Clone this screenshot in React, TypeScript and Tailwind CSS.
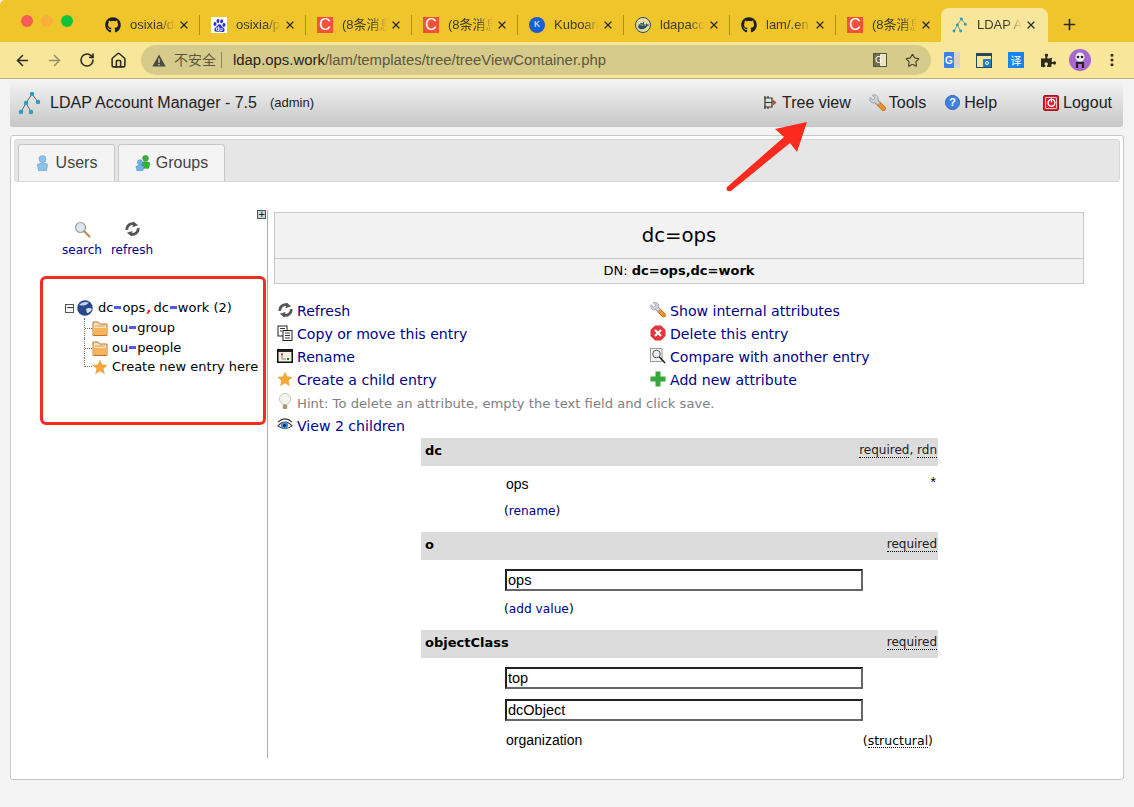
import React from 'react';
import { ArrowLeft, ArrowRight, RotateCw, Home, Star, MoreVertical, Plus, X } from 'lucide-react';
import { FaGithub, FaPuzzlePiece, FaDocker } from 'react-icons/fa';
import { SiBaidu } from 'react-icons/si';

const LamLogo = ({ size = 24 }: { size?: number }) => (
  <svg width={size} height={size} viewBox="0 0 24 24">
    <g stroke="#5a6a70" strokeWidth="1" fill="none">
      <path d="M14 3 L8 12 L3 21 M8 12 L13 21 M14 3 L20 11" />
    </g>
    <g fill="#2f9cc0">
      <circle cx="14" cy="3" r="2.2" />
      <circle cx="8" cy="12" r="2.2" />
      <circle cx="20" cy="11" r="2.2" />
      <circle cx="3" cy="21" r="2.2" />
      <circle cx="13" cy="21" r="2.2" />
    </g>
  </svg>
);

const CsdnIcon = () => (
  <span className="w-4 h-4 bg-[#f5503a] text-white flex items-center justify-center text-[16px] leading-none font-['Liberation_Sans',sans-serif]">C</span>
);

const browserTabs = [
  { icon: <FaGithub size={16} className="text-[#1b1f23]" />, title: 'osixia/d' },
  { icon: <span className="w-4 h-4 bg-white flex items-center justify-center"><SiBaidu size={13} className="text-[#2932e1]" /></span>, title: 'osixia/p' },
  { icon: <CsdnIcon />, title: '(8条消息' },
  { icon: <CsdnIcon />, title: '(8条消息' },
  { icon: <span className="w-4 h-4 rounded-full bg-[#1a5fd0] text-white flex items-center justify-center text-[9px] font-['Liberation_Sans',sans-serif]">K</span>, title: 'Kuboard' },
  { icon: <span className="w-4 h-4 rounded-full border border-[#24505f] bg-[#e8d9a0] flex items-center justify-center"><FaDocker size={11} className="text-[#24505f]" /></span>, title: 'ldapacc' },
  { icon: <FaGithub size={16} className="text-[#1b1f23]" />, title: 'lam/.en' },
  { icon: <CsdnIcon />, title: '(8条消息' },
];

const tabTitle = "ml-[9px] w-[45px] overflow-hidden whitespace-nowrap text-[13px] text-[#3b3b2f] font-['Liberation_Sans','Noto_Sans_CJK_SC',sans-serif] [mask-image:linear-gradient(to_right,black_65%,transparent)]";

const BrowserTab = ({ icon, title, last }: { icon: React.ReactNode; title: string; last: boolean }) => (
  <div className={`w-[106px] h-[20px] shrink-0 flex items-center pl-[11px] ${last ? '' : 'border-r border-[#a98d2a]'}`}>
    <span className="w-4 h-4 flex items-center justify-center shrink-0">{icon}</span>
    <span className={tabTitle}>{title}</span>
    <X size={12} strokeWidth={2.4} className="ml-[3px] text-[#2a2a20]" />
  </div>
);

const TabStrip = () => (
  <div className="h-[42px] bg-[#f0c52c] rounded-tl-[5px] flex shrink-0">
    <div className="w-[94px] shrink-0 flex items-start gap-2 pl-[21px] pt-[15px]">
      <span className="w-3 h-3 rounded-full bg-[#f65c58]" />
      <span className="w-3 h-3 rounded-full bg-[#f7ae3c]" />
      <span className="w-3 h-3 rounded-full bg-[#15c23c]" />
    </div>
    <div className="flex items-center h-[42px] pt-[15px] pb-[7px]">
      {browserTabs.map((t, i) => (
        <BrowserTab key={i} icon={t.icon} title={t.title} last={i === browserTabs.length - 1} />
      ))}
    </div>
    <div className="self-end ml-[-1px] w-[107px] h-[34px] bg-[#f8e79b] rounded-t-[8px] flex items-center pl-[11px]">
      <LamLogo size={16} />
      <span className={tabTitle}>LDAP A</span>
      <X size={12} strokeWidth={2.4} className="ml-[3px] text-[#2a2a20]" />
    </div>
    <Plus size={17} strokeWidth={2.4} className="ml-[13px] mt-[16px] text-[#2a2a20]" />
  </div>
);

const Toolbar = () => (
  <div className="h-[37px] bg-[#f8e79b] border-b border-[#bfb27a] flex items-center shrink-0 pl-[14px]">
    <ArrowLeft size={17} strokeWidth={2.2} className="text-[#2e2a1c]" />
    <ArrowRight size={17} strokeWidth={2.2} className="ml-[15px] text-[#9a8f66]" />
    <RotateCw size={16} strokeWidth={2.4} className="ml-[16px] text-[#2e2a1c]" />
    <Home size={17} strokeWidth={2.2} className="ml-[15px] text-[#2e2a1c]" />
    <div className="ml-[14px] w-[790px] h-[30px] rounded-full bg-[#d6cb8a] flex items-center pl-[11px] pr-[11px]">
      <svg width="14" height="13" viewBox="0 0 14 13"><path d="M7 0.5 L13.7 12.5 H0.3 Z" fill="#4a4a40" /><rect x="6.3" y="4.5" width="1.4" height="4.5" fill="#d6cb8a" /><rect x="6.3" y="10" width="1.4" height="1.4" fill="#d6cb8a" /></svg>
      <span className="ml-[8px] -mt-[2px] text-[14px] text-[#5c5840] font-['Noto_Sans_CJK_SC',sans-serif]">不安全</span>
      <span className="ml-[5px] w-px h-[16px] bg-[#8f8860]" />
      <span className="ml-[11px] text-[14.9px] text-[#5c5840] font-['Liberation_Sans',sans-serif]"><span className="text-[#26241a]">ldap.ops.work</span>/lam/templates/tree/treeViewContainer.php</span>
      <span className="ml-auto w-[14px] h-[14px] border border-[#55523c] bg-gradient-to-r from-[#6f6c52] from-50% to-[#ece6bf] to-50% text-white text-[9px] leading-none flex items-center pl-[1px]">G</span>
      <Star size={15} strokeWidth={1.8} className="ml-[18px] text-[#45422f]" />
    </div>
    <div className="ml-[13px] flex items-center">
      <span className="w-4 h-4 bg-gradient-to-r from-[#3b82e8] from-60% to-[#d8d4c0] to-60% text-white text-[10px] font-bold flex items-center pl-[1px] rounded-[1px] font-['Liberation_Sans',sans-serif]">G</span>
      <span className="ml-[16px] w-4 h-[15px] border-t-[3px] border border-[#27475c] flex items-end justify-end"><span className="w-[8px] h-[8px] rounded-[1px] bg-[#1d7ec4] flex items-center justify-center"><span className="w-[4px] h-[4px] rounded-full border border-white" /></span></span>
      <span className="ml-[16px] w-4 h-4 bg-[#1a84ee] text-white text-[11px] leading-none flex items-center justify-center font-['Noto_Sans_CJK_SC',sans-serif]">译</span>
      <FaPuzzlePiece size={15} className="ml-[17px] text-[#2e2a1c]" />
      <span className="ml-[13px] w-[22px] h-[22px] rounded-full bg-[#a866d0] flex items-center justify-center">
        <svg width="14" height="16" viewBox="0 0 14 16"><circle cx="7" cy="5" r="4.5" fill="#eee" /><circle cx="5" cy="5" r="1.3" fill="#222" /><circle cx="9" cy="5" r="1.3" fill="#222" /><path d="M3 16 V10 H11 V16 H9 V12 H5 V16 Z" fill="#222" /></svg>
      </span>
      <MoreVertical size={16} strokeWidth={2.6} className="ml-[13px] text-[#2e2a1c]" />
    </div>
  </div>
);

/* small page icons */
const TreeViewIcon = () => (
  <svg width="14" height="15" viewBox="0 0 14 15" fill="none" stroke="#3a3026" strokeWidth="1.2"><path d="M2 1 V14 M1 3 H9 V12 H1 M2 7.5 H9 M5 1 V3 M5 12 V14" /><path d="M10 4.5 L13.5 7.5 L10 10.5 Z" fill="#a4552a" stroke="none" /></svg>
);
const WrenchIcon = () => (
  <svg width="17" height="17" viewBox="0 0 17 17">
    <path d="M7 7 L14.5 14.5" stroke="#b4620f" strokeWidth="4.6" strokeLinecap="round" />
    <path d="M7 7 L14.5 14.5" stroke="#f0922c" strokeWidth="3.4" strokeLinecap="round" />
    <path d="M1.2 3.4 L4 6 L6 4 L3.4 1.2 Q7 -0.2 8.6 2.4 Q9.6 4.4 8.6 6 L11 8.6 L8.6 11 L6 8.6 Q3.8 9.6 2 8.2 Q0 6.4 1.2 3.4 Z" fill="#cfd4dc" stroke="#8a919c" strokeWidth="0.7" />
  </svg>
);
const HelpIcon = () => (
  <span className="w-[15px] h-[15px] rounded-full bg-[#3f83e0] border border-[#2b62b8] text-white text-[11px] font-bold leading-none flex items-center justify-center font-['Liberation_Sans',sans-serif]">?</span>
);
const LogoutIcon = () => (
  <span className="w-[16px] h-[16px] bg-[#d8202a] border border-[#9a1a1f] rounded-[2px] flex items-center justify-center">
    <span className="w-[12px] h-[12px] rounded-[1px] border border-white/70 flex items-center justify-center">
      <svg width="9" height="9" viewBox="0 0 10 10" fill="none" stroke="#fff" strokeWidth="1.5"><circle cx="5" cy="5.4" r="3.8" /><path d="M5 0.5 V5" /></svg>
    </span>
  </span>
);
const UserShape = ({ color, x = 0 }: { color: string; x?: number }) => (
  <g transform={`translate(${x} 0)`} fill={color} stroke="#00000044" strokeWidth="0.5">
    <circle cx="6.5" cy="4" r="3.6" />
    <path d="M2.6 16 L1 9.5 Q6.5 6 12 9.5 L10.4 16 Z" />
  </g>
);
const UsersIcon = () => <svg width="13" height="16" viewBox="0 0 13 16"><UserShape color="#86c2ee" /></svg>;
const GroupsIcon = () => (
  <svg width="16" height="16" viewBox="0 0 19 19"><g transform="translate(6 0)"><UserShape color="#36b03a" /></g><g transform="translate(0 5) scale(0.9)"><UserShape color="#6fb2e6" /></g></svg>
);
const SearchIcon = () => (
  <svg width="17" height="17" viewBox="0 0 17 17"><circle cx="6.5" cy="6.5" r="5" fill="#dfe5ec" stroke="#9aa0a8" strokeWidth="1.2" /><path d="M10.5 10.5 L15.5 15.5" stroke="#c09050" strokeWidth="2.2" strokeLinecap="round" /></svg>
);
const RefreshIcon = () => (
  <svg width="15" height="16" viewBox="0 0 16 16" fill="none" stroke="#555" strokeWidth="3"><path d="M2 9 A6 6 0 0 1 10 2.6" /><path d="M14 7 A6 6 0 0 1 6 13.4" /><path d="M9 0 L14 4 L8 6 Z" fill="#555" stroke="none" /><path d="M7 16 L2 12 L8 10 Z" fill="#555" stroke="none" /></svg>
);
const CopyIcon = () => (
  <svg width="16" height="16" viewBox="0 0 16 16" fill="#fff" stroke="#222" strokeWidth="1"><rect x="1" y="1" width="9" height="10" /><rect x="6" y="5.5" width="9" height="10" /><path d="M3 3.5 H8 M3 6 H5 M8 8 H13 M8 10.5 H13 M8 13 H13" strokeWidth="0.9" /></svg>
);
const RenameIcon = () => (
  <svg width="16" height="14" viewBox="0 0 16 14"><rect x="0.75" y="0.75" width="14.5" height="12.5" fill="#f3efe2" stroke="#111" strokeWidth="1.5" /><rect x="1" y="1" width="14" height="2" fill="#222" /><rect x="4" y="4.5" width="2" height="2" fill="#c03030" /><path d="M5 7 V10 H9" stroke="#777" strokeWidth="0.8" fill="none" /><rect x="10" y="9" width="2" height="2" fill="#208040" /></svg>
);
const StarIcon = () => (
  <svg width="16" height="16" viewBox="0 0 16 16"><path d="M8 0.5 L10.2 5.6 L15.7 6.1 L11.5 9.7 L12.8 15.2 L8 12.3 L3.2 15.2 L4.5 9.7 L0.3 6.1 L5.8 5.6 Z" fill="#f5a63a" /></svg>
);
const BulbIcon = () => (
  <svg width="14" height="17" viewBox="0 0 14 17"><circle cx="7" cy="6" r="5.6" fill="#f4f4ec" stroke="#bdbdb0" strokeWidth="0.8" /><rect x="4.8" y="11.5" width="4.4" height="4.5" rx="1" fill="#a89a70" /></svg>
);
const EyeIcon = () => (
  <svg width="17" height="16" viewBox="0 0 17 16"><path d="M1 9 Q8.5 0.5 16 9 Q8.5 15 1 9 Z" fill="#fff" stroke="#333" strokeWidth="1.1" /><circle cx="8" cy="8.5" r="3.8" fill="#3b8ad8" /><circle cx="8" cy="8.5" r="1.5" fill="#123" /><path d="M1 5 Q8.5 -2 16 5" stroke="#333" strokeWidth="1.2" fill="none" /></svg>
);
const DeleteIcon = () => (
  <svg width="16" height="16" viewBox="0 0 16 16"><path d="M5 0.5 H11 L15.5 5 V11 L11 15.5 H5 L0.5 11 V5 Z" fill="#e4343c" /><path d="M5 5 L11 11 M11 5 L5 11" stroke="#fff" strokeWidth="2.2" /></svg>
);
const CompareIcon = () => (
  <svg width="16" height="16" viewBox="0 0 16 16"><rect x="0.5" y="0.5" width="11.5" height="13" fill="#f6f6f6" stroke="#999" /><circle cx="6.5" cy="6" r="3.8" fill="#e8edf2" stroke="#555" /><path d="M9.5 9 L15 15" stroke="#222" strokeWidth="1.6" /></svg>
);
const AddIcon = () => (
  <svg width="16" height="16" viewBox="0 0 16 16"><path d="M5.5 0.5 H10.5 V5.5 H15.5 V10.5 H10.5 V15.5 H5.5 V10.5 H0.5 V5.5 H5.5 Z" fill="#35a83e" /></svg>
);
const FolderIcon = () => (
  <svg width="16" height="15" viewBox="0 0 16 15"><path d="M1 14.5 V1 H6 L7.5 3 H15 V14.5 Z" fill="#fbe3c2" stroke="#b8762c" strokeWidth="1" /><path d="M1.5 7 H14.5 V14 H1.5 Z" fill="#f9b25c" /><path d="M3 5 H13" stroke="#c98a40" strokeWidth="0.8" /></svg>
);
const GlobeIcon = () => (
  <svg width="16" height="16" viewBox="0 0 16 16"><circle cx="8" cy="8" r="7.8" fill="#27498e" /><path d="M2 5 Q6 0.5 12 2.5 Q9 6 5 5.5 Z" fill="#c9d6ec" /><path d="M9 9 Q13 7 15 9 Q13 13 10 13 Z" fill="#dbe4f4" /></svg>
);

const Eq = () => <span className="inline-block w-[7px] h-[3px] mx-[1px] mb-[3px] bg-[#4a5cf5]" />;

const leftActions = [
  { icon: <RefreshIcon />, label: 'Refresh' },
  { icon: <CopyIcon />, label: 'Copy or move this entry' },
  { icon: <RenameIcon />, label: 'Rename' },
  { icon: <StarIcon />, label: 'Create a child entry' },
];
const rightActions = [
  { icon: <WrenchIcon />, label: 'Show internal attributes' },
  { icon: <DeleteIcon />, label: 'Delete this entry' },
  { icon: <CompareIcon />, label: 'Compare with another entry' },
  { icon: <AddIcon />, label: 'Add new attribute' },
];

const ActionRow = ({ icon, label }: { icon: React.ReactNode; label: string }) => (
  <div className="h-[23px] flex items-center gap-[4px] text-[14.1px] text-[#00008b] whitespace-nowrap">
    <span className="w-[16px] -mt-[4px] flex justify-center">{icon}</span>
    <span>{label}</span>
  </div>
);

const AttrHeader = ({ name, children }: { name: string; children: React.ReactNode }) => (
  <div className="h-[28px] bg-[#dcdcdc] flex items-center justify-between pl-[4px] pr-[1px] pb-[3px] text-[13px]">
    <b className="text-black">{name}</b>
    <span className="-mt-[1px] text-[12px] text-[#222]">{children}</span>
  </div>
);
const Dotted = ({ children }: { children: React.ReactNode }) => (
  <span className="border-b border-dotted border-black leading-[13px] inline-block">{children}</span>
);
const ValueInput = ({ value }: { value: string }) => (
  <div className="ml-[84px] w-[358px] h-[22px] border-2 border-t-[#222] border-l-[#222] border-r-[#666] border-b-[#666] bg-white pl-[1px] pt-[1px] flex items-center text-[14.5px] text-black font-['Liberation_Sans',sans-serif]">{value}</div>
);

const TreeRow = ({ icon, children, end }: { icon: React.ReactNode; children: React.ReactNode; end?: boolean }) => (
  <div className={`flex items-center h-[20px] pl-[41px] whitespace-nowrap ${end ? '-mt-[1px]' : ''}`}>
    <span className={`w-[8px] border-l border-dotted border-[#777] ${end ? 'h-[10px] self-start' : 'h-[20px]'} flex ${end ? 'items-end' : 'items-center'}`}>
      <span className="w-[8px] h-px border-t border-dotted border-[#777]" />
    </span>
    {icon}
    <span className="ml-[4px] text-[13px] text-black">{children}</span>
  </div>
);

export default function App() {
  return (
    <div className="relative w-[1134px] h-[807px] overflow-hidden bg-[#f3f3f3] flex flex-col font-['DejaVu_Sans',sans-serif]">
      <TabStrip />
      <Toolbar />

      {/* LAM header */}
      <div className="ml-[10px] mt-[1px] w-[1113px] h-[47px] pb-[2px] rounded-b-[3px] bg-gradient-to-b from-[#f4f4f4] to-[#c7c7c7] flex items-center shrink-0 font-['Liberation_Sans',sans-serif] text-[#222]">
        <span className="ml-[8px]"><LamLogo /></span>
        <span className="ml-[8px] text-[16px] whitespace-nowrap">LDAP Account Manager - 7.5</span>
        <span className="ml-[13px] text-[13px] mt-[1px]">(admin)</span>
        <span className="ml-auto flex items-center gap-[5px] text-[16px]"><TreeViewIcon />Tree view</span>
        <span className="ml-[18px] flex items-center gap-[3px] text-[16px]"><WrenchIcon />Tools</span>
        <span className="ml-[19px] flex items-center gap-[4px] text-[16px]"><HelpIcon />Help</span>
        <span className="ml-[46px] mr-[11px] flex items-center gap-[4px] text-[16px]"><LogoutIcon />Logout</span>
      </div>

      {/* main panel */}
      <div className="ml-[10px] mt-[8px] w-[1114px] h-[645px] bg-white border border-[#c8c8c8] rounded-[3px] p-[3px] pt-[3px] shrink-0">
        <div className="h-[43px] bg-[#e6e6e6] border border-[#d8d8d8] rounded-[3px] flex items-end gap-[3px] pl-[3px] font-['Liberation_Sans',sans-serif] text-[16px] text-[#444]">
          <div className="w-[97px] h-[37px] pb-[1px] bg-[#f4f4f4] border border-b-0 border-[#c8c8c8] rounded-t-[3px] flex items-center justify-center gap-[7px]"><UsersIcon />Users</div>
          <div className="w-[107px] h-[37px] pb-[1px] bg-[#f4f4f4] border border-b-0 border-[#c8c8c8] rounded-t-[3px] flex items-center justify-center gap-[5px]"><GroupsIcon />Groups</div>
        </div>

        <div className="flex mt-[28px]">
          {/* tree column */}
          <div className="relative w-[254px] h-[548px] border-r border-[#a8aeb6] shrink-0">
            <span className="absolute right-[1px] top-[0px] w-[9px] h-[9px] bg-[#cfd6dc] border border-[#555] text-[9px] leading-[6px] text-black text-center">+</span>
            <div className="flex ml-[44px] pt-[11px] text-[12px] text-[#00008b]">
              <div className="w-[48px] flex flex-col items-center gap-[3px]"><SearchIcon /><span>search</span></div>
              <div className="w-[52px] flex flex-col items-center gap-[4px]"><RefreshIcon /><span>refresh</span></div>
            </div>
            <div className="mt-[17px] ml-[26px] w-[226px] h-[149px] border-[3px] border-[#f52a20] rounded-[6px] pt-[19px]">
              <div className="flex items-center h-[20px] pl-[22px] whitespace-nowrap text-[13px] text-black">
                <span className="w-[9px] h-[9px] border border-[#555] text-[10px] leading-[6px] text-center">−</span>
                <span className="ml-[3px]"><GlobeIcon /></span>
                <span className="ml-[5px]">dc<Eq />ops<span className="inline-block w-[8px] text-center text-[#f02020] font-bold italic">,</span>dc<Eq />work (2)</span>
              </div>
              <TreeRow icon={<FolderIcon />}>ou<Eq />group</TreeRow>
              <TreeRow icon={<FolderIcon />}>ou<Eq />people</TreeRow>
              <TreeRow icon={<StarIcon />} end>Create new entry here</TreeRow>
            </div>
          </div>

          {/* entry column */}
          <div className="ml-[6px] w-[810px] shrink-0">
            <div className="border border-[#c8c8c8] bg-[#f2f2f2] mt-[2px]">
              <div className="h-[45px] pt-[1px] flex items-center justify-center text-[19.7px] text-black">dc=ops</div>
              <div className="h-[25px] border-t border-[#c8c8c8] flex items-center justify-center text-[13px] text-black">DN:&nbsp;<b>dc=ops,dc=work</b></div>
            </div>
            <div className="mt-[16px] pl-[3px] grid grid-cols-[372px_1fr]">
              <div>{leftActions.map(a => <ActionRow key={a.label} {...a} />)}</div>
              <div className="pl-[1px]">{rightActions.map(a => <ActionRow key={a.label} {...a} />)}</div>
            </div>
            <div className="pl-[3px] h-[23px] flex items-center gap-[4px] text-[13.15px] text-[#808080] whitespace-nowrap">
              <span className="w-[16px] -mt-[4px] flex justify-center"><BulbIcon /></span>
              Hint: To delete an attribute, empty the text field and click save.
            </div>
            <div className="pl-[3px]">
              <ActionRow icon={<EyeIcon />} label="View 2 children" />
            </div>
            <div className="ml-[147px] w-[517px]">
              <AttrHeader name="dc"><Dotted>required</Dotted>, <Dotted>rdn</Dotted></AttrHeader>
              <div className="relative h-[66px] text-[14px] text-black font-['Liberation_Sans',sans-serif]">
                <span className="absolute left-[85px] top-[8px]">ops</span>
                <span className="absolute right-[2px] top-[6px]">*</span>
                <span className="absolute left-[83px] top-[36px] text-[12.2px] font-['DejaVu_Sans',sans-serif]">(<span className="text-[#00008b]">rename</span>)</span>
              </div>
              <AttrHeader name="o"><Dotted>required</Dotted></AttrHeader>
              <div className="h-[70px] pt-[9px]">
                <ValueInput value="ops" />
                <div className="ml-[83px] mt-[9px] text-[12.2px]">(<span className="text-[#00008b]">add value</span>)</div>
              </div>
              <AttrHeader name="objectClass"><Dotted>required</Dotted></AttrHeader>
              <div className="pt-[9px] flex flex-col gap-[10px]">
                <ValueInput value="top" />
                <ValueInput value="dcObject" />
              </div>
              <div className="mt-[9px] ml-[85px] flex items-center justify-between pr-[5px] text-[14px] text-black font-['Liberation_Sans',sans-serif]">
                <span>organization</span>
                <span className="mt-[1px] text-[12.5px] font-['DejaVu_Sans',sans-serif]">(<Dotted>structural</Dotted>)</span>
              </div>
            </div>
          </div>
        </div>
      </div>

      {/* annotation arrow */}
      <svg className="absolute left-[720px] top-[115px]" width="95" height="82" viewBox="0 0 95 82">
        <path d="M7 72 L64 22 L55 14 L87 7 L77 37 L70 28 L11 76 Q5 77 7 72 Z" fill="#fb2a1e" />
      </svg>
    </div>
  );
}
